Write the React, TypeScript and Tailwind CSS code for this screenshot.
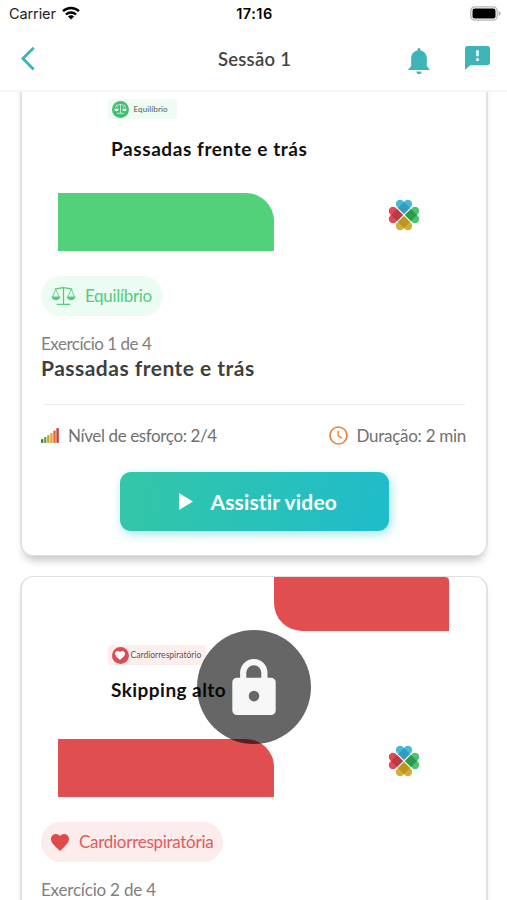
import type { ReactNode } from "react";

interface Exercise {
  index: number;
  name: string;
  category: string;
  tag: string;
  tone: "green" | "red";
  effort?: string;
  duration?: string;
  locked: boolean;
}

const TOTAL = 4;

const EXERCISES: Exercise[] = [
  {
    index: 1,
    name: "Passadas frente e trás",
    category: "Equilíbrio",
    tag: "Equilíbrio",
    tone: "green",
    effort: "2/4",
    duration: "2 min",
    locked: false,
  },
  {
    index: 2,
    name: "Skipping alto",
    category: "Cardiorrespiratória",
    tag: "Cardiorrespiratório",
    tone: "red",
    locked: true,
  },
];

const HEART = "M12 21.35l-1.45-1.32C5.4 15.36 2 12.28 2 8.5 2 5.42 4.42 3 7.5 3c1.74 0 3.41.81 4.5 2.09C13.09 3.81 14.76 3 16.5 3 19.58 3 22 5.42 22 8.5c0 3.78-3.4 6.86-8.55 11.54L12 21.35z";

function HeartIcon({ className }: { className: string }) {
  return (
    <svg viewBox="2 3 20 18.35" className={className} fill="currentColor" preserveAspectRatio="none">
      <path d={HEART} />
    </svg>
  );
}

function ScaleIcon({ className }: { className: string }) {
  return (
    <svg viewBox="0 0 26 20" className={className} fill="none" stroke="currentColor" strokeWidth="1.3">
      <path d="M4 2.6c3.5 0 5-1.3 9-1.3s5.5 1.3 9 1.3M13 0.5v18M6 18.7h14" />
      <path d="M4.8 3L1.5 11M4.8 3l4 8M21.2 3l-4 8M21.2 3l3.3 8" strokeWidth="0.9" />
      <path d="M0.5 10.6h9.2c-.6 2.7-2.4 3.8-4.6 3.8s-4-1.1-4.6-3.800zM16.3 10.6h9.2c-.6 2.7-2.4 3.8-4.6 3.8s-4-1.1-4.6-3.800z" fill="currentColor" stroke="none" />
    </svg>
  );
}

function Lock() {
  return (
    <svg viewBox="0 0 44 56" className="h-[56px] w-[44px]">
      <path d="M11.2 21V13.8a10.6 10.6 0 0 1 21.2 0V21" fill="none" stroke="#f7f7f7" strokeWidth="6.2" />
      <path fillRule="evenodd" fill="#f7f7f7" d="M5 18.7h34a4.7 4.7 0 0 1 4.7 4.7v28a4.7 4.7 0 0 1-4.7 4.6H5a4.7 4.7 0 0 1-4.7-4.6v-28A4.7 4.7 0 0 1 5 18.700zm17 13.100a5.300 5.300 0 1 0 0 10.600 5.300 5.300 0 0 0 0-10.600z" />
    </svg>
  );
}

const PETALS = [
  { angle: -135, light: "#46b9d6", dark: "#2f9cc0" },
  { angle: -45, light: "#47c573", dark: "#2b9a4a" },
  { angle: 45, light: "#d3ad35", dark: "#bd941f" },
  { angle: 135, light: "#dc4b55", dark: "#bd3a45" },
];

function Clover() {
  return (
    <svg viewBox="-16 -16 32 32" className="ml-[114px] mt-[6px] size-8">
      {PETALS.map((p) => (
        <g key={p.angle} transform={`rotate(${p.angle})`}>
          <path d="M.8.8H10.6a4.2 4.2 0 0 1 0 8.4H.8z" fill={p.light} />
          <path d="M.8.8V10.6a4.2 4.2 0 0 0 8.4 0V.8z" fill={p.light} />
          <path d="M.8.8h8.400v8.400H.8z" fill={p.dark} />
        </g>
      ))}
    </svg>
  );
}

const BARS = [
  { h: 4, color: "#2e8b3d" },
  { h: 6, color: "#6fa03c" },
  { h: 8, color: "#c3a63c" },
  { h: 10, color: "#eda03f" },
  { h: 12.5, color: "#e0693c" },
  { h: 15, color: "#c93a35" },
];

function EffortBars() {
  return (
    <svg viewBox="0 0 18 15" className="h-[15px] w-[18px]">
      {BARS.map((b, i) => (
        <rect key={b.color} x={i * 3.08} y={15 - b.h} width="2.4" height={b.h} rx="0.8" fill={b.color} />
      ))}
    </svg>
  );
}

function StatusBar() {
  return (
    <div className="flex h-7 items-center justify-between pl-[9px] pr-[6px] font-['Inter',sans-serif] text-black">
      <div className="flex w-[120px] items-center gap-[6px] text-[14.5px] leading-7 tracking-[-0.1px] text-[#222]">
        Carrier
        <svg viewBox="0 0 18 14" className="mb-[2px] h-[14px] w-[18px]" fill="none" stroke="#000" strokeWidth="2.3">
          <path d="M1 5.2a11.6 11.6 0 0 1 16 0" />
          <path d="M3.9 8.5a7.5 7.5 0 0 1 10.2 0" />
          <path d="M9 13.6L5.9 10.6a4.4 4.4 0 0 1 6.2 0z" fill="#000" stroke="none" />
        </svg>
      </div>
      <div className="-ml-[1px] text-[14.5px] font-semibold leading-7 tracking-[0.5px]">17:16</div>
      <div className="flex w-[120px] justify-end">
        <svg viewBox="0 0 31 15" className="mb-[2px] h-[15px] w-[31px]">
          <rect x="0.8" y="0.8" width="26.4" height="13.4" rx="4.2" fill="#fff" stroke="#b5b5b5" strokeWidth="1.3" />
          <rect x="2.5" y="2.5" width="23" height="10" rx="2.2" fill="#000" />
          <path d="M28.7 5.2c1.2.4 1.8 1.2 1.8 2.3s-.6 1.9-1.8 2.3z" fill="#aaa" />
        </svg>
      </div>
    </div>
  );
}

function Header() {
  return (
    <div className="flex h-16 items-center border-b-2 border-[#f5f5f5] pl-5 pr-[17px] text-[#3cb4b8]">
      <div className="flex flex-1">
        <svg viewBox="0 0 16 26" className="h-[26px] w-4" fill="none" stroke="currentColor" strokeWidth="2.8">
          <path d="M13.7 1.8L2.9 12.5l10.8 10.9" />
        </svg>
      </div>
      <h1 className="-ml-[1px] mt-[2px] text-[18.5px] font-semibold tracking-[0.25px] text-[#444]">Sessão 1</h1>
      <div className="flex flex-1 items-center justify-end gap-[35px]">
        <svg viewBox="3 2 18 20" className="mt-1 h-[26px] w-[22px]" fill="currentColor" preserveAspectRatio="none">
          <path d="M14 20a2 2 0 0 1-4 0h4M12 2a1.2 1.2 0 0 1 1.2 1.2v.8c3 .5 5.200 2.800 5.200 6v5.800L21 19H3l2.600-3.200V10c0-3.200 2.200-5.500 5.200-6v-.8A1.200 1.200 0 0 1 12 2z" />
        </svg>
        <svg viewBox="2 2 20 20" className="mb-[2px] h-[24px] w-[25px]" fill="currentColor" preserveAspectRatio="none">
          <path d="M13 10.5h-2V5.5h2m0 9h-2v-2.2h2m7-10.3H4a2 2 0 0 0-2 2v18l4-4h14a2 2 0 0 0 2-2V4a2 2 0 0 0-2-2z" />
        </svg>
      </div>
    </div>
  );
}

function Thumbnail({ exercise }: { exercise: Exercise }) {
  const green = exercise.tone === "green";
  const block = green ? "bg-[#52d07a]" : "bg-[#e04e50]";
  return (
    <div className="relative ml-[36px] flex h-[220px] w-[391px] flex-col">
      <div className={`h-[54px] w-[175px] self-end rounded-bl-[28px] rounded-tr-[4px] ${block}`} />
      <div
        className={`ml-[50px] mt-[14px] flex h-[20px] items-center self-start rounded-[3px] pl-[3.5px] text-[#555] ${
          green ? "w-[69px] gap-[5px] bg-[#effbf3] text-[8px]" : "w-[98px] gap-[2px] bg-[#fdeeee] text-[8.5px]"
        }`}
      >
        <span className={`flex size-[17px] items-center justify-center rounded-full text-white ${green ? "bg-[#45bd72]" : "bg-[#dc4c55]"}`}>
          {green ? <ScaleIcon className="h-[10px] w-[13px]" /> : <HeartIcon className="h-[9px] w-[10px]" />}
        </span>
        <span className={green ? "tracking-[0.1px]" : "tracking-[0.02px]"}>{exercise.tag}</span>
      </div>
      <div className={`ml-[53px] h-6 whitespace-nowrap text-[19px] font-bold leading-6 text-[#111] ${green ? "mt-[18px] tracking-[0.58px]" : "mt-[13px] tracking-[0.45px]"}`}>
        {exercise.name}
      </div>
      <div className="mt-auto flex">
        <div className={`h-[58px] w-[216px] rounded-tr-[28px] ${block}`} />
        <Clover />
      </div>
      {exercise.locked && (
        <div className="absolute left-[139px] top-[53px] flex size-[114px] items-center justify-center rounded-full bg-black/60">
          <Lock />
        </div>
      )}
    </div>
  );
}

function Chip({ tone, children }: { tone: Exercise["tone"]; children: ReactNode }) {
  return tone === "green" ? (
    <div className="flex h-10 w-[122px] items-center gap-[9px] rounded-full bg-[#edfcf2] pl-[10px] text-[17px] tracking-[-0.35px] text-[#52cc7c]">
      <ScaleIcon className="h-[20px] w-[25px]" />
      {children}
    </div>
  ) : (
    <div className="flex h-10 w-[182px] items-center gap-[10px] rounded-full bg-[#fdecec] pl-[10px] text-[17px] tracking-[-0.28px] text-[#e25a5c]">
      <HeartIcon className="h-[17px] w-[18px] text-[#df4a4b]" />
      {children}
    </div>
  );
}

function Details({ exercise }: { exercise: Exercise }) {
  return (
    <>
      <div className="text-[21px] font-bold leading-[26px] tracking-[0.48px] text-[#3f3f3f]">{exercise.name}</div>
      <div className="mx-[2px] mt-[23px] border-t border-[#ececec]" />
      <div className="mt-[18px] flex h-[25px] items-center justify-between pr-[1px] text-[17px] text-[#707070]">
        <div className="flex items-center gap-[9px] tracking-[-0.38px]">
          <EffortBars />
          Nível de esforço: {exercise.effort}
        </div>
        <div className="flex items-center gap-[9px] tracking-[-0.28px]">
          <svg viewBox="0 0 19 19" className="size-[19px]" fill="none" stroke="#e5853f" strokeWidth="1.7">
            <circle cx="9.5" cy="9.5" r="8.5" />
            <path d="M9.2 4.8v5.1l3.8 2.3" strokeWidth="1.4" />
          </svg>
          Duração: {exercise.duration}
        </div>
      </div>
      <button className="mx-auto mt-[24px] flex h-[59px] w-[269px] items-center rounded-[11px] bg-linear-[100deg,#33c7a7,#1fbccb] pl-[59px] text-[21px] font-bold tracking-[0.15px] text-white shadow-[2px_3px_10px_rgba(40,200,195,0.45)]">
        <svg viewBox="0 0 14 17" className="mr-[18px] h-[17px] w-[14px]" fill="currentColor">
          <path d="M0 0l14 8.5L0 17z" />
        </svg>
        Assistir video
      </button>
    </>
  );
}

function ExerciseCard({ exercise }: { exercise: Exercise }) {
  return (
    <div className="h-[526px] overflow-hidden rounded-[13px] border border-x-2 border-[#e2e2e2] bg-white shadow-[0_8px_8px_-4px_rgba(0,0,0,0.24)]">
      <Thumbnail exercise={exercise} />
      <div className="mt-[25px] flex flex-col px-[19px]">
        <div className="flex">
          <Chip tone={exercise.tone}>{exercise.category}</Chip>
        </div>
        <div className={`mt-[17px] text-[17px] leading-[22px] text-[#808080] ${exercise.locked ? "tracking-[-0.2px]" : "tracking-[-0.48px]"}`}>
          Exercício {exercise.index} de {TOTAL}
        </div>
        {!exercise.locked && <Details exercise={exercise} />}
      </div>
    </div>
  );
}

export default function App() {
  return (
    <div className="flex h-[900px] w-[507px] flex-col overflow-hidden bg-white font-['Lato',sans-serif]">
      <StatusBar />
      <Header />
      <div className="min-h-0 flex-1 overflow-hidden pl-5 pr-[19px]">
        <div className="-mt-[62px] flex flex-col gap-5">
          {EXERCISES.map((exercise) => (
            <ExerciseCard key={exercise.index} exercise={exercise} />
          ))}
        </div>
      </div>
    </div>
  );
}
